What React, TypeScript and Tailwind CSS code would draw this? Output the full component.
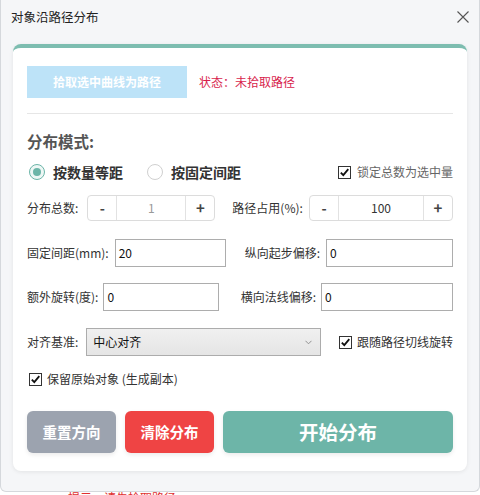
import React from "react";

const font = "font-['Noto_Sans_CJK_SC','Microsoft_YaHei',sans-serif]";

function Check() {
  return (
    <span className="flex h-[13px] w-[13px] items-center justify-center border border-[#333] bg-white">
      <svg width="11" height="11" viewBox="0 0 11 11">
        <path d="M1.8 5.6 L4.3 8.2 L9.3 2.2" fill="none" stroke="#111" strokeWidth="1.8" />
      </svg>
    </span>
  );
}

function Stepper({ value, width, dim }: { value: string; width: string; dim?: boolean }) {
  return (
    <div className={`flex h-[26px] items-stretch rounded-[4px] border border-[#dcdcdc] bg-white ${width}`}>
      <div className="flex w-[29px] items-center justify-center border-r border-[#e2e2e2] text-[14px] font-bold text-[#444]">-</div>
      <div className={`flex flex-1 items-center justify-center text-[12px] ${dim ? "text-[#999]" : "text-[#333]"}`}>{value}</div>
      <div className="flex w-[29px] items-center justify-center border-l border-[#e2e2e2] text-[15px] font-bold text-[#444]">+</div>
    </div>
  );
}

function TextInput({ value, width }: { value: string; width: string }) {
  return (
    <div className={`flex h-[28px] items-center border border-[#adadad] bg-white pl-[3px] text-[12px] text-[#111] ${width}`}>{value}</div>
  );
}

export default function App() {
  return (
    <div className={`h-[495px] w-[480px] overflow-hidden bg-white ${font}`}>
      <div className="h-[492px] w-[480px] rounded-b-[6px] border-x border-b border-[#d5d8dc] bg-[#f5f6f8]">
        <div className="flex h-[34px] items-center justify-between pl-[10px] pr-[10px]">
          <span className="text-[12.5px] text-[#222]">对象沿路径分布</span>
          <svg width="12" height="12" viewBox="0 0 12 12">
            <path d="M0.5 0.5 L11.5 11.5 M11.5 0.5 L0.5 11.5" stroke="#555" strokeWidth="1.1" />
          </svg>
        </div>
        <div className="ml-[12px] mt-[10px] w-[454px] rounded-[8px] border-t-4 border-[#7dbdb0] bg-white px-[14px] pb-[18px] pt-[18px] shadow-[0_1px_4px_rgba(0,0,0,0.08)]">
          <div className="flex items-center">
            <div className="flex h-[32px] w-[160px] items-center justify-center bg-[#bde3f8] text-[12px] font-bold text-white">拾取选中曲线为路径</div>
            <span className="ml-[12px] text-[12px] text-[#d81e4d]">状态：未拾取路径</span>
          </div>
          <div className="mt-[15px] h-px bg-[#e6e6e6]" />
          <div className="mt-[16px] text-[15.5px] font-bold leading-[22px] text-[#555]">分布模式:</div>
          <div className="mt-[12px] flex h-[16px] items-center">
            <span className="ml-[2px] flex h-[16px] w-[16px] items-center justify-center rounded-full border border-[#6cb5a8] bg-[#eef7f5]">
              <span className="h-[8px] w-[8px] rounded-full bg-[#6cb5a8]" />
            </span>
            <span className="ml-[8px] text-[14px] font-bold text-[#333]">按数量等距</span>
            <span className="ml-[24px] h-[16px] w-[16px] rounded-full border border-[#d0d0d0] bg-white" />
            <span className="ml-[8px] text-[14px] font-bold text-[#333]">按固定间距</span>
            <span className="ml-auto flex items-center">
              <Check />
              <span className="ml-[6px] text-[12px] text-[#666]">锁定总数为选中量</span>
            </span>
          </div>
          <div className="mt-[15px] flex items-center">
            <span className="text-[12px] text-[#333]">分布总数:</span>
            <span className="ml-[9px]"><Stepper value="1" width="w-[128px]" dim /></span>
            <span className="ml-[17px] text-[12px] text-[#333]">路径占用(%):</span>
            <span className="ml-auto"><Stepper value="100" width="w-[144px]" /></span>
          </div>
          <div className="mt-[18px] flex items-center">
            <span className="text-[12px] text-[#333]">固定间距(mm):</span>
            <span className="ml-[6px]"><TextInput value="20" width="w-[111px]" /></span>
            <span className="ml-auto text-[12px] text-[#333]">纵向起步偏移:</span>
            <span className="ml-[6px]"><TextInput value="0" width="w-[127px]" /></span>
          </div>
          <div className="mt-[16px] flex items-center">
            <span className="text-[12px] text-[#333]">额外旋转(度):</span>
            <span className="ml-[5px]"><TextInput value="0" width="w-[116px]" /></span>
            <span className="ml-auto text-[12px] text-[#333]">横向法线偏移:</span>
            <span className="ml-[5px]"><TextInput value="0" width="w-[132px]" /></span>
          </div>
          <div className="mt-[17px] flex items-center">
            <span className="text-[12px] text-[#333]">对齐基准:</span>
            <div className="ml-[8px] flex h-[28px] w-[235px] items-center justify-between border border-[#acacac] bg-gradient-to-b from-[#f0f0f0] to-[#e5e5e5] pl-[6px] pr-[8px] text-[12px] text-[#111]">
              <span>中心对齐</span>
              <svg width="7" height="5" viewBox="0 0 7 5">
                <path d="M0.5 0.8 L3.5 3.8 L6.5 0.8" fill="none" stroke="#888" strokeWidth="0.9" />
              </svg>
            </div>
            <span className="ml-auto flex items-center">
              <Check />
              <span className="ml-[5px] text-[12px] text-[#333]">跟随路径切线旋转</span>
            </span>
          </div>
          <div className="mt-[14px] flex items-center pl-[2px]">
            <Check />
            <span className="ml-[5px] text-[12px] text-[#333]">保留原始对象 (生成副本)</span>
          </div>
          <div className="mt-[23px] flex h-[42px] gap-[9px]">
            <div className="flex w-[89px] items-center justify-center rounded-[6px] bg-[#9ca3af] text-[14.5px] font-bold text-white shadow-[0_2px_4px_rgba(0,0,0,0.08)]">重置方向</div>
            <div className="flex w-[89px] items-center justify-center rounded-[6px] bg-[#ef4444] text-[14.5px] font-bold text-white shadow-[0_2px_4px_rgba(0,0,0,0.08)]">清除分布</div>
            <div className="flex flex-1 items-center justify-center rounded-[6px] bg-[#6db5a8] text-[19.5px] font-bold text-white shadow-[0_2px_4px_rgba(0,0,0,0.08)]">开始分布</div>
          </div>
        </div>
      </div>
      <div className="flex pl-[68px]">
        <span className="text-[12px] leading-[12px] text-[#e03030]">提示：请先拾取路径</span>
      </div>
    </div>
  );
}
